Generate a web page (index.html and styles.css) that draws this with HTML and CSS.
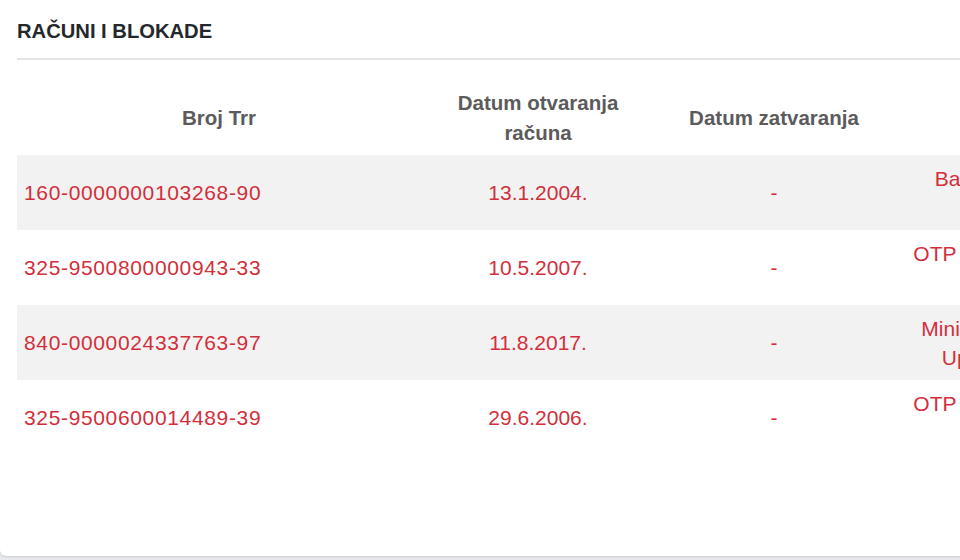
FILE: index.html
```html
<!DOCTYPE html>
<html lang="sr">
<head>
<meta charset="utf-8">
<title>Računi i blokade</title>
<link rel="stylesheet" href="styles.css">
</head>
<body>
<section class="card">
  <h2 class="card-title">RAČUNI I BLOKADE</h2>
  <table class="accounts">
    <colgroup>
      <col class="c-trr"><col class="c-open"><col class="c-close"><col class="c-bank">
    </colgroup>
    <thead>
      <tr>
        <th>Broj Trr</th>
        <th>Datum otvaranja<br>računa</th>
        <th>Datum zatvaranja</th>
        <th>Banka</th>
      </tr>
    </thead>
    <tbody>
      <tr class="odd">
        <td class="trr">160-0000000103268-90</td>
        <td>13.1.2004.</td>
        <td>-</td>
        <td>Banca Intesa akcionarsko<br>društvo Beograd</td>
      </tr>
      <tr>
        <td class="trr">325-9500800000943-33</td>
        <td>10.5.2007.</td>
        <td>-</td>
        <td>OTP banka Srbija akcionarsko<br>društvo Novi Sad</td>
      </tr>
      <tr class="odd">
        <td class="trr">840-0000024337763-97</td>
        <td>11.8.2017.</td>
        <td>-</td>
        <td>Ministarstvo finansija Srbije -<br>Uprava za trezor Zemun</td>
      </tr>
      <tr>
        <td class="trr">325-9500600014489-39</td>
        <td>29.6.2006.</td>
        <td>-</td>
        <td>OTP banka Srbija akcionarsko<br>društvo Novi Sad</td>
      </tr>
    </tbody>
  </table>
</section>
</body>
</html>
```
FILE: styles.css
```css
html, body {
  margin: 0;
  padding: 0;
}
body {
  width: 960px;
  height: 560px;
  overflow: hidden;
  background: #e6e8eb;
  font-family: "Liberation Sans", Arial, sans-serif;
}
.card {
  width: 1400px;
  height: 556px;
  box-sizing: border-box;
  background: #ffffff;
  border-radius: 0 0 6px 6px;
  box-shadow: 0 1px 2px rgba(0, 0, 0, 0.12);
  padding: 0 0 0 17px;
}
.card-title {
  margin: 0;
  height: 58px;
  line-height: 62px;
  font-size: 20.2px;
  font-weight: 700;
  color: #24282c;
  border-bottom: 2px solid #e1e4e8;
}
.accounts {
  border-collapse: collapse;
  table-layout: fixed;
  width: 1200px;
  margin-top: 21px;
}
.c-trr { width: 404px; }
.c-open { width: 234px; }
.c-close { width: 238px; }
.c-bank { width: 324px; }
.accounts th {
  height: 74px;
  padding: 0 4px;
  box-sizing: border-box;
  font-size: 20.5px;
  line-height: 30px;
  font-weight: 700;
  color: #5b5b5b;
  text-align: center;
  vertical-align: middle;
}
.accounts td {
  height: 75px;
  padding: 0 7px;
  box-sizing: border-box;
  font-size: 21px;
  line-height: 29px;
  color: #d22f3b;
  text-align: center;
  vertical-align: middle;
}
.accounts td.trr {
  text-align: left;
  letter-spacing: 0.65px;
}
.accounts tr.odd td {
  background: #f2f2f2;
}
```
